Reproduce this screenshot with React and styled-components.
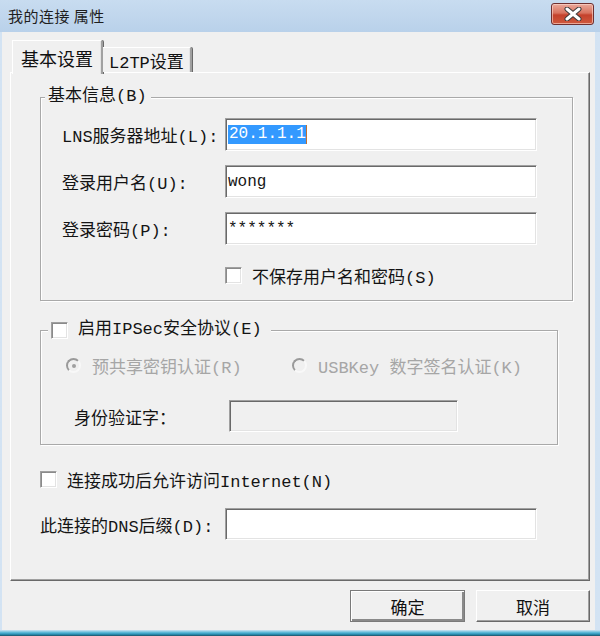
import React from 'react';
import styled, { createGlobalStyle } from 'styled-components';

const GlobalStyle = createGlobalStyle`
  html, body {
    margin: 0;
    padding: 0;
    background: #f0f0f0;
  }
  body {
    font-family: "Liberation Mono", "Noto Sans CJK SC", monospace;
    font-size: 17px;
    color: #141414;
  }
`;

const App = () => {
  return (
    <>
      <GlobalStyle />
      <Window>
        <TitleBar>
          <Title>我的连接 属性</Title>
          <CloseButton>
            <svg width="20" height="14" viewBox="0 0 20 14">
              <path d="M4 2 L16 12 M16 2 L4 12" stroke="#3b3b3b" strokeWidth="5" strokeLinecap="round" />
              <path d="M4 2 L16 12 M16 2 L4 12" stroke="#ffffff" strokeWidth="3" strokeLinecap="round" />
            </svg>
          </CloseButton>
        </TitleBar>

        <Body>
          <TabStrip>
            <Tab $active>基本设置</Tab>
            <Tab>L2TP设置</Tab>
          </TabStrip>

          <Panel>
            <Group $width={533}>
              <Legend>基本信息(B)</Legend>
              <BasicContent>
                <FieldRow>
                  <FieldLabel $width={163}>LNS服务器地址(L):</FieldLabel>
                  <TextBox $width={312}>
                    <Selected>20.1.1.1</Selected>
                    <Caret />
                  </TextBox>
                </FieldRow>
                <FieldRow>
                  <FieldLabel $width={163}>登录用户名(U):</FieldLabel>
                  <TextBox $width={312}>wong</TextBox>
                </FieldRow>
                <FieldRow>
                  <FieldLabel $width={163}>登录密码(P):</FieldLabel>
                  <TextBox $width={312}>*******</TextBox>
                </FieldRow>
                <CheckRow $indent={163} $top={6}>
                  <CheckBox />
                  <span>不保存用户名和密码(S)</span>
                </CheckRow>
              </BasicContent>
            </Group>

            <Group $width={518} $top={19}>
              <CheckLegend>
                <CheckBox />
                <span>启用IPSec安全协议(E)</span>
              </CheckLegend>
              <IpsecContent>
                <RadioRow>
                  <RadioItem>
                    <Radio $checked />
                    <span>预共享密钥认证(R)</span>
                  </RadioItem>
                  <RadioItem>
                    <Radio />
                    <span>USBKey 数字签名认证(K)</span>
                  </RadioItem>
                </RadioRow>
                <IdentityRow>
                  <FieldLabel $width={155}>身份验证字：</FieldLabel>
                  <TextBox $width={229} $disabled />
                </IdentityRow>
              </IpsecContent>
            </Group>

            <CheckRow $top={24}>
              <CheckBox />
              <span>连接成功后允许访问Internet(N)</span>
            </CheckRow>

            <DnsRow>
              <FieldLabel $width={185}>此连接的DNS后缀(D):</FieldLabel>
              <TextBox $width={312} />
            </DnsRow>
          </Panel>

          <ButtonRow>
            <Button $default>确定</Button>
            <Button>取消</Button>
          </ButtonRow>
        </Body>
        <FrameBottom />
      </Window>
    </>
  );
};

export default App;

// window frame
const Window = styled.div`
  width: 600px;
  height: 636px;
  display: flex;
  flex-direction: column;
  background: linear-gradient(90deg, #d3e3f3, #c3d8ee 50%, #d3e3f3);
  overflow: hidden;
`;

const TitleBar = styled.div`
  height: 32px;
  flex: none;
  display: flex;
  align-items: flex-start;
  justify-content: space-between;
  padding: 0 6px 0 8px;
  background: linear-gradient(#c8dcf0, #b9d1ea);
`;

const Title = styled.span`
  font-family: "Noto Sans CJK SC", sans-serif;
  font-size: 15px;
  line-height: 32px;
  color: #1e1e1e;
  letter-spacing: 0.5px;
`;

const CloseButton = styled.div`
  width: 41px;
  height: 20px;
  margin-top: 3px;
  display: flex;
  align-items: center;
  justify-content: center;
  border: 1px solid #6e3030;
  border-radius: 3px;
  box-shadow: inset 0 0 0 1px rgba(255, 220, 210, 0.6);
  background: linear-gradient(#eaa99b, #d8735f 45%, #c4412c 55%, #cf5a3e);
`;

const Body = styled.div`
  flex: 1;
  display: flex;
  flex-direction: column;
  margin: 0 5px 0 2px;
  padding: 8px 5px 8px 8px;
  background: #f0f0f0;
`;

const FrameBottom = styled.div`
  height: 6px;
  flex: none;
  background: linear-gradient(#cfe5f3, #5fbad8 40%, #2a93b8 70%, #1d4f62);
`;

// tabs
const TabStrip = styled.div`
  height: 32px;
  display: flex;
  align-items: flex-end;
  padding-left: 2px;
  position: relative;
  z-index: 1;
`;

const Tab = styled.div`
  box-sizing: border-box;
  height: ${p => (p.$active ? 34 : 25)}px;
  margin-bottom: ${p => (p.$active ? -2 : 0)}px;
  padding: 0 ${p => (p.$active ? 8 : 6)}px;
  display: flex;
  align-items: center;
  font-size: ${p => (p.$active ? 18 : 17)}px;
  background: #f0f0f0;
  border-top: 1px solid #fff;
  border-left: ${p => (p.$active ? '1px solid #fff' : '0')};
  border-right: 2px solid #a0a0a0;
  border-top-right-radius: 2px;
  box-shadow: inset -1px 0 0 #e3e3e3, 1px 0 0 #696969;
  color: #111;
`;

const Panel = styled.div`
  flex: 1;
  display: flex;
  flex-direction: column;
  padding: 14px 0 0 29px;
  border-top: 1px solid #fff;
  border-left: 1px solid #fff;
  border-right: 1px solid #696969;
  border-bottom: 1px solid #696969;
  box-shadow: inset -1px -1px 0 #a0a0a0;
`;

// group boxes
const Group = styled.fieldset`
  margin: ${p => p.$top || 0}px 0 0;
  padding: 0;
  width: ${p => p.$width}px;
  box-sizing: border-box;
  border: 1px solid #a9a9a9;
  box-shadow: inset 1px 1px 0 #fff, 1px 1px 0 #fff;
`;

const Legend = styled.legend`
  margin-left: 4px;
  padding: 0 4px 0 3px;
  line-height: 20px;
  background: #f0f0f0;
`;

const CheckLegend = styled(Legend)`
  margin-left: 7px;
  padding: 0 9px 0 3px;
  display: flex;
  align-items: center;
  gap: 10px;
`;

const BasicContent = styled.div`
  display: flex;
  flex-direction: column;
  gap: 14px;
  padding: 11px 0 15px 21px;
`;

const IpsecContent = styled.div`
  display: flex;
  flex-direction: column;
  gap: 27px;
  padding: 13px 0 12px 25px;
`;

const FieldRow = styled.div`
  display: flex;
  align-items: center;
  height: 33px;
`;

const IdentityRow = styled(FieldRow)`
  height: 32px;
  padding-left: 8px;
`;

const DnsRow = styled(FieldRow)`
  margin-top: 19px;
  height: 32px;
`;

const FieldLabel = styled.span`
  width: ${p => p.$width}px;
  flex: none;
  white-space: nowrap;
`;

const TextBox = styled.div`
  box-sizing: border-box;
  width: ${p => p.$width}px;
  height: 100%;
  display: flex;
  align-items: center;
  padding-left: 2px;
  font-size: 16px;
  background: ${p => (p.$disabled ? '#f0f0f0' : '#fff')};
  border: 1px solid;
  border-color: #a0a0a0 #fff #fff #a0a0a0;
  box-shadow: inset 1px 1px 0 #696969, inset -1px -1px 0 #e3e3e3;
`;

const Selected = styled.span`
  background: #3399ff;
  color: #fff;
  line-height: 19px;
  padding-left: 1px;
`;

const Caret = styled.span`
  width: 1px;
  height: 19px;
  background: #c07030;
`;

const CheckRow = styled.div`
  display: flex;
  align-items: center;
  gap: 10px;
  height: 20px;
  margin-top: ${p => p.$top || 0}px;
  margin-left: ${p => p.$indent || 0}px;
`;

const CheckBox = styled.span`
  box-sizing: border-box;
  width: 17px;
  height: 17px;
  flex: none;
  background: #fff;
  border: 1px solid;
  border-color: #a0a0a0 #fff #fff #a0a0a0;
  box-shadow: inset 1px 1px 0 #8a8a8a, inset -1px -1px 0 #e3e3e3;
`;

const RadioRow = styled.div`
  display: grid;
  grid-template-columns: 226px auto;
  height: 20px;
  align-items: center;
`;

const RadioItem = styled.div`
  display: flex;
  align-items: center;
  gap: 11px;
  color: #a6a6a6;
`;

const Radio = styled.span`
  box-sizing: border-box;
  width: 15px;
  height: 15px;
  flex: none;
  display: flex;
  align-items: center;
  justify-content: center;
  border-radius: 50%;
  border: 2px solid;
  border-color: #9a9a9a #f8f8f8 #f8f8f8 #9a9a9a;
  background: #f0f0f0;

  &::after {
    content: '';
    width: 4px;
    height: 4px;
    border-radius: 50%;
    background: ${p => (p.$checked ? '#a0a0a0' : 'transparent')};
  }
`;

// dialog buttons
const ButtonRow = styled.div`
  height: 32px;
  margin-top: 9px;
  display: flex;
  justify-content: flex-end;
  gap: 11px;
`;

const Button = styled.div`
  box-sizing: border-box;
  width: ${p => (p.$default ? 115 : 114)}px;
  display: flex;
  align-items: center;
  justify-content: center;
  font-family: "Noto Sans CJK SC", sans-serif;
  font-size: 17px;
  color: #111;
  background: #f0f0f0;
  border: 1px solid;
  border-color: ${p => (p.$default ? '#7a7a7a' : '#fff #696969 #696969 #fff')};
  box-shadow: ${p =>
    p.$default
      ? 'inset 1px 1px 0 #fff, inset -2px -2px 0 #8a8a8a'
      : 'inset -1px -1px 0 #a0a0a0'};
`;
